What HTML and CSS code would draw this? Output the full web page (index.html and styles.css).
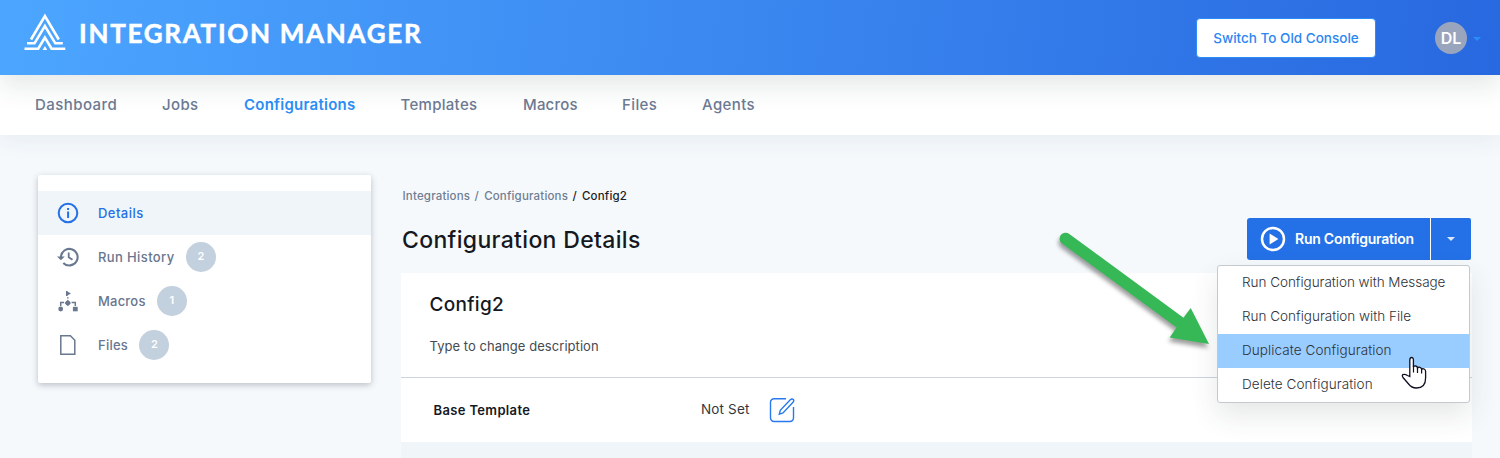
FILE: index.html
```html
<!DOCTYPE html>
<html lang="en">
<head>
<meta charset="utf-8">
<title>Integration Manager</title>
<link rel="stylesheet" href="styles.css">
</head>
<body>
<header class="topbar">
  <svg class="logo" width="42" height="38" viewBox="0 0 42 38">
    <g fill="none" stroke="#fff" stroke-width="2.6">
      <path d="M7 26.5L20.9 3L34.800 26.5"/>
      <path d="M3 30.300H10.500L20.900 13L31.300 30.300H38.800"/>
      <path d="M.5 35.700H14.200L20.900 24.500L27.600 35.700H41.300"/>
    </g>
    <path d="M18.600 37L20.900 33L23.200 37Z" fill="#fff"/>
  </svg>
  <div class="brand">INTEGRATION MANAGER</div>
  <button class="switch">Switch To Old Console</button>
  <div class="avatar">DL</div>
  <svg class="avatar-caret" width="8" height="4" viewBox="0 0 8 4"><path d="M0 0H8L4 4Z" fill="#2b8cf7"/></svg>
</header>
<nav class="nav">
  <a class="n1">Dashboard</a><a class="n2">Jobs</a><a class="n3 active">Configurations</a><a class="n4">Templates</a><a class="n5">Macros</a><a class="n6">Files</a><a class="n7">Agents</a>
</nav>
<div class="page">
  <aside class="side">
    <div class="item selected">
      <svg width="22" height="22" viewBox="0 0 22 22"><circle cx="11" cy="11" r="9.3" fill="none" stroke="#2470e6" stroke-width="2"/><path d="M10.1 6.1h2v2h-2zM10.1 9.6h2v6.4h-2z" fill="#2470e6"/></svg>
      <span class="s1">Details</span>
    </div>
    <div class="item">
      <svg width="22" height="22" viewBox="0 0 22 22"><path d="M4 11A8.300 8.300 0 1 1 6.3 16.900" fill="none" stroke="#69788f" stroke-width="2.1"/><path d="M0 10.600H7.800L3.900 14.200Z" fill="#69788f"/><path d="M11.7 6.6V11.2L15.5 13.8" fill="none" stroke="#69788f" stroke-width="1.8"/></svg>
      <span class="s2">Run History</span><b class="count">2</b>
    </div>
    <div class="item">
      <svg width="22" height="22" viewBox="0 0 22 22" fill="#69788f"><path d="M9 .8L14 3.500L9 6.200Z"/><path d="M10.800 9.800L14 13L10.800 16.200L7.600 13Z"/><circle cx="10.8" cy="13" r="2.300"/><circle cx="3.700" cy="19" r="2.400"/><rect x="15.9" y="16.800" width="4.800" height="4.500"/><path d="M9.700 1V6M10.800 7.200V8.600M3.700 16V12.600H7M14.600 12.600H18.300V16" fill="none" stroke="#69788f" stroke-width="1.5"/></svg>
      <span class="s3">Macros</span><b class="count">1</b>
    </div>
    <div class="item">
      <svg width="22" height="22" viewBox="0 0 22 22"><path d="M3.800 1.800H13.400L17.800 6.300V20.200H3.800Z" fill="none" stroke="#69788f" stroke-width="1.500"/></svg>
      <span class="s4">Files</span><b class="count">2</b>
    </div>
  </aside>
  <main class="main">
    <div class="crumbs"><a class="b1">Integrations</a><i>/</i><a class="b2">Configurations</a><i class="dark">/</i><span class="b3">Config2</span></div>
    <div class="heading">
      <h1>Configuration Details</h1>
      <div class="actions">
        <button class="run">
          <svg width="26" height="26" viewBox="0 0 26 26"><circle cx="13" cy="13" r="11" fill="none" stroke="#fff" stroke-width="2.5"/><path d="M9.6 7.6L18.4 13L9.6 18.4Z" fill="#fff"/></svg>
          <span>Run Configuration</span>
        </button>
        <button class="toggle"><svg width="8" height="4" viewBox="0 0 8 4"><path d="M0 0H8L4 4Z" fill="#dbe8fc"/></svg></button>
        <div class="menu">
          <a class="m1">Run Configuration with Message</a>
          <a class="m2">Run Configuration with File</a>
          <a class="m3 hover">Duplicate Configuration</a>
          <a class="m4">Delete Configuration</a>
        </div>
      </div>
    </div>
    <section class="card">
      <div class="intro"><h2>Config2</h2><p>Type to change description</p></div>
      <div class="row">
        <strong>Base Template</strong><span class="value">Not Set</span>
        <svg width="26" height="26" viewBox="0 0 26 26" fill="none" stroke="#2779ed" stroke-width="1.4"><path d="M17 1.700H5A3.500 3.500 0 0 0 1.500 5.200V21A3.500 3.500 0 0 0 5 24.500H21A3.500 3.500 0 0 0 24.500 21V10"/><path d="M10.300 17.200L11.300 13.300L21.500 2.600Q23 1.300 24.300 2.500Q25.300 3.900 24 5.300L14 15.900Z"/></svg>
      </div>
    </section>
    <div class="below"></div>
  </main>
</div>
<svg class="arrow" width="180" height="140" viewBox="1045 220 180 140"><path d="M1069.300 233.900L1183.500 317.800L1190.700 308L1209 344L1169.700 337.500L1176.600 327.500L1062 243.600A6 6 0 0 1 1069.300 233.900Z" fill="#37b856"/></svg>
<svg class="hand" width="28" height="34" viewBox="0 0 28 34"><path d="M9.800 20.500V4Q9.800 1.500 11.600 1.500T13.400 4V11Q14 9.600 15.700 10Q17.400 10.300 17.500 12Q18.600 10.800 20 11.400Q21.500 11.900 21.600 13.300Q22.500 12.400 24.200 13Q25.600 13.600 25.600 15.500V22Q25.600 32 16.500 32Q11.500 32 8.600 28L3 21.500Q1.500 19 3.300 18.500Q5 17.900 7.500 19.500Z" fill="#fff" stroke="#101020" stroke-width="1.300"/><path d="M13.500 10V16.500M17.500 12V17M21.600 13V17.500" stroke="#101020" stroke-width="1.200"/></svg>
</body>
</html>
```
FILE: styles.css
```css
* { box-sizing: border-box; }
body { margin: 0; height: 458px; overflow: hidden; background: #f5f9fc; font-family: Inter, "Liberation Sans", sans-serif; color: #15191f; white-space: nowrap; }
button { font: inherit; border: 0; padding: 0; }
h1, h2, p { margin: 0; }
svg { flex: none; }
.topbar { position: relative; z-index: 2; height: 75px; display: flex; align-items: flex-start; background: linear-gradient(98deg, #4ca6ff 0%, #2868e0 100%); box-shadow: 0 12px 24px rgba(40, 60, 60, .11); }
.logo { margin: 13px 0 0 24px; }
.brand { flex: none; margin-left: 13px; padding-top: 17px; width: 1117px; color: #fff; font: 700 26px/32px Lato, sans-serif; letter-spacing: 1.700px; -webkit-text-stroke: .5px #fff; }
.switch { margin-top: 18px; width: 180px; height: 40px; border: 1px solid #2b8df7; border-radius: 4px; background: #fff; color: #2b86f2; font-size: 13.500px; font-weight: 500; flex: none; padding-bottom: 1px; }
.avatar { flex: none; margin: 22px 6px 0 59px; width: 32px; height: 32px; border-radius: 50%; background: #99a5bd; color: #fff; font-weight: 600; font-size: 16px; line-height: 33px; text-align: center; }
.avatar-caret { margin-top: 37px; }
.nav { height: 60px; display: flex; align-items: center; gap: 45px; padding: 0 35px 2px; background: #fff; box-shadow: 0 4px 24px rgba(40, 60, 80, .07); font-size: 15px; font-weight: 500; color: #6d7a93; }
.n1 { width: 82px; letter-spacing: .45px; }
.n2 { width: 37px; letter-spacing: .35px; }
.n3 { width: 111.500px; letter-spacing: .25px; }
.n4 { width: 77.500px; letter-spacing: .3px; }
.n5 { width: 54px; letter-spacing: .2px; }
.n6 { width: 35px; letter-spacing: .4px; }
.n7 { letter-spacing: .4px; }
.active { color: #2b8ff5; font-weight: 600; }
.page { display: flex; align-items: flex-start; gap: 30px; padding: 40px 28px 0 38px; }
.side { width: 333px; height: 208px; padding-top: 16px; background: #fff; border-radius: 2px; box-shadow: 0 2px 6px rgba(50, 60, 75, .3); flex: none; font-size: 13px; font-weight: 500; color: #68768e; }
.item { height: 44px; display: flex; align-items: center; padding-left: 19px; }
.item span { margin-left: 19px; }
.selected { background: #f0f5f9; color: #2470e6; }
.s1 { letter-spacing: .45px; }
.s2 { letter-spacing: .38px; }
.s3 { letter-spacing: .2px; }
.s4 { letter-spacing: .25px; }
.count { width: 30px; height: 30px; margin-left: 11.300px; border-radius: 50%; background: #c3d0de; color: #fff; font-size: 11px; line-height: 29px; text-align: center; font-weight: 600; }
.main { width: 1071px; }
.crumbs { display: flex; margin-top: 13px; padding-left: 1.500px; height: 16px; line-height: 16px; font-size: 11.500px; font-weight: 500; letter-spacing: .18px; color: #707d93; }
.crumbs i { font-style: normal; margin: 0 5.200px 0 4.300px; }
.crumbs .dark, .b3 { color: #1b1f26; }
.heading { height: 42px; margin: 14px 0 13px; display: flex; align-items: center; justify-content: space-between; }
h1 { font-size: 23px; line-height: 30px; font-weight: 500; letter-spacing: .33px; padding-left: 1px; margin-top: 2px; }
.actions { position: relative; display: flex; gap: 1px; height: 42px; margin-right: 1px; }
.run, .toggle { background: #2470e6; color: #fff; display: flex; align-items: center; }
.run { width: 183px; border-radius: 3px 0 0 3px; padding-left: 13px; font-size: 14px; font-weight: 600; letter-spacing: -.24px; }
.run span { margin: -1px 0 0 9px; }
.toggle { width: 40px; justify-content: center; border-radius: 0 2px 2px 0; box-shadow: -1px 0 0 #fff; }
.menu { position: absolute; z-index: 3; top: 47px; right: 1px; width: 253px; height: 138px; border: 1px solid #c3c9cd; border-radius: 3px; background: #fff; box-shadow: 0 12px 28px rgba(40, 60, 60, .12); font-size: 13.500px; font-weight: 300; color: #2d3237; }
.menu a { display: block; height: 34px; line-height: 33px; padding-left: 24px; }
.menu .m1 { letter-spacing: -.03px; }
.menu .m3, .menu .m4 { letter-spacing: .08px; }
.menu .hover { background: #99ccff; }
.card { background: #fff; }
.intro { height: 105px; padding: 20px 29px 0 28.500px; border-bottom: 1px solid #ccd4df; }
h2 { font-size: 19px; line-height: 24px; font-weight: 500; letter-spacing: .3px; }
.intro p { margin-top: 20px; font-size: 13px; line-height: 18px; letter-spacing: .05px; color: #444b51; }
.row { height: 64px; display: flex; align-items: center; padding-left: 32.500px; font-size: 13.500px; }
.row strong { width: 267.500px; font-size: 13px; font-weight: 600; letter-spacing: .35px; }
.value { width: 68px; margin-top: -2px; letter-spacing: .15px; color: #33383d; }
.below { height: 20px; background: #f0f5f9; }
.arrow { position: absolute; z-index: 4; left: 1045px; top: 220px; filter: drop-shadow(-1px 4px 2px rgba(0, 0, 0, .38)); }
.hand { position: absolute; z-index: 5; left: 1400px; top: 356px; }
```
